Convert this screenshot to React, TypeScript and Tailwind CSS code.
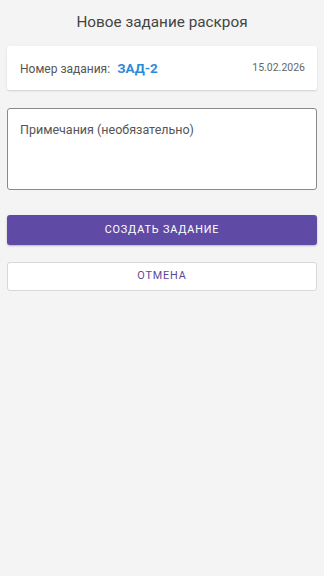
import { useState } from 'react';

const App = () => {
  const [notes, setNotes] = useState('');

  return (
    <div
      className="min-h-[576px] w-full bg-[#f4f4f4] px-[7px] pt-[11px]"
      style={{ fontFamily: 'Roboto, "Noto Sans", sans-serif' }}
    >
      <h1 className="text-center text-[15.3px] leading-[22px] text-[#444]">
        Новое задание раскроя
      </h1>

      <div className="mt-[13px] flex h-[44px] items-center justify-between rounded-[2px] bg-white pl-[13px] pr-[12px] shadow-[0_1px_2px_rgba(0,0,0,0.15)]">
        <div className="flex items-baseline">
          <span className="text-[12px] text-[#555]">Номер задания:</span>
          <span className="ml-[7px] text-[13.5px] font-bold text-[#2d8bd6]">
            ЗАД-2
          </span>
        </div>
        <span className="text-[10.5px] text-[#666]">15.02.2026</span>
      </div>

      <textarea
        value={notes}
        onChange={(e) => setNotes(e.target.value)}
        placeholder="Примечания (необязательно)"
        className="mt-[18px] block h-[82px] w-full resize-none rounded-[3px] border border-[#8a8a8a] bg-white px-[12px] pt-[12px] text-[12.5px] text-[#333] outline-none placeholder:text-[#555]"
      />

      <button className="mt-[25px] flex h-[30px] w-full items-center justify-center rounded-[3px] bg-[#5f4ba6] text-[10.8px] tracking-[0.08em] text-white shadow-[0_1px_2px_rgba(0,0,0,0.25)]">
        СОЗДАТЬ ЗАДАНИЕ
      </button>

      <button className="mt-[17px] flex h-[29px] w-full items-center justify-center rounded-[3px] border border-[#d8d8d8] bg-white text-[10.8px] tracking-[0.08em] text-[#5a4a98]">
        ОТМЕНА
      </button>
    </div>
  );
};

export default App;
